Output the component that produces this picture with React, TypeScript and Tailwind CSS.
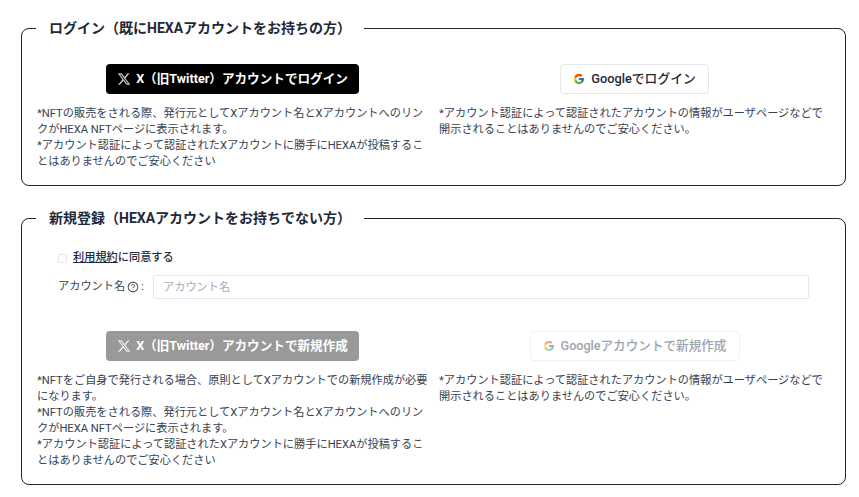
import { AiOutlineQuestionCircle } from 'react-icons/ai';
import { FcGoogle } from 'react-icons/fc';
import type { ReactNode } from 'react';

function XLogo() {
  return (
    <svg viewBox="0 0 24 24" className="w-[14px] h-[14px] fill-current opacity-80 shrink-0">
      <path d="M18.244 2.25h3.308l-7.227 8.26 8.502 11.24H16.17l-5.214-6.817L4.99 21.75H1.68l7.73-8.835L1.254 2.25H8.08l4.713 6.231zm-1.161 17.52h1.833L7.084 4.126H5.117z" />
    </svg>
  );
}

function GoogleLogo({ dim }: { dim?: boolean }) {
  return <FcGoogle className={`w-3 h-3 shrink-0 ${dim ? 'opacity-50' : ''}`} />;
}

function Box({ title, children }: { title: string; children: ReactNode }) {
  return (
    <fieldset className="border border-[#1f2430] rounded-lg px-0 pb-[15px]">
      <legend className="ml-[14px] px-[13px] text-[14px] leading-5 font-bold text-[#1f2937]">{title}</legend>
      {children}
    </fieldset>
  );
}

export default function App() {
  return (
    <div className="w-[859px] h-[497px] bg-white pl-[21px] pr-[13px] pt-[18px] flex flex-col gap-[22px] font-['Roboto','Noto_Sans_CJK_JP',sans-serif] text-[11.2px] leading-4 text-[#374151] overflow-hidden">
      <Box title="ログイン（既にHEXAアカウントをお持ちの方）">
        <div className="grid grid-cols-2 gap-x-[11px] pt-[26px] px-[15px]">
          <div>
            <div className="flex justify-center">
              <button className="w-[253px] h-[30px] rounded bg-black text-white text-[12.6px] font-bold flex items-center justify-center gap-[5px]">
                <XLogo />
                <span>X（旧Twitter）アカウントでログイン</span>
              </button>
            </div>
            <div className="mt-[12px]">
              <p>*NFTの販売をされる際、発行元としてXアカウント名とXアカウントへのリンクがHEXA NFTページに表示されます。</p>
              <p>*アカウント認証によって認証されたXアカウントに勝手にHEXAが投稿することはありませんのでご安心ください</p>
            </div>
          </div>
          <div>
            <div className="flex justify-center">
              <button className="w-[149px] h-[30px] rounded border border-[#e5e7eb] bg-white text-[#1f2937] text-[12.8px] font-medium flex items-center justify-center gap-[6px]">
                <GoogleLogo />
                <span>Googleでログイン</span>
              </button>
            </div>
            <div className="mt-[12px]">
              <p>*アカウント認証によって認証されたアカウントの情報がユーザページなどで開示されることはありませんのでご安心ください。</p>
            </div>
          </div>
        </div>
      </Box>

      <Box title="新規登録（HEXAアカウントをお持ちでない方）">
        <div className="pt-[22px] pl-[36px] pr-[36px]">
          <label className="flex items-center gap-[6px] h-4 text-[#1f2937] font-medium">
            <span className="w-[9px] h-[9px] border border-[#e5e7eb] rounded-[1px]" />
            <span>
              <span className="underline">利用規約</span>に同意する
            </span>
          </label>
          <div className="flex items-center mt-[9px] h-6">
            <span className="w-[95px] shrink-0 flex items-center gap-[2px]">
              アカウント名
              <AiOutlineQuestionCircle className="w-3 h-3" />
              <span>:</span>
            </span>
            <input
              placeholder="アカウント名"
              className="flex-1 h-6 border border-[#e2e8f0] rounded-[2px] px-[9px] text-[11.2px] placeholder:text-[#a3aab5] outline-none"
            />
          </div>
        </div>
        <div className="grid grid-cols-2 gap-x-[11px] pt-[32px] px-[15px]">
          <div>
            <div className="flex justify-center">
              <button className="w-[253px] h-[30px] rounded bg-[#999999] text-white text-[12.6px] font-bold flex items-center justify-center gap-[5px]">
                <XLogo />
                <span>X（旧Twitter）アカウントで新規作成</span>
              </button>
            </div>
            <div className="mt-[12px]">
              <p>*NFTをご自身で発行される場合、原則としてXアカウントでの新規作成が必要になります。</p>
              <p>*NFTの販売をされる際、発行元としてXアカウント名とXアカウントへのリンクがHEXA NFTページに表示されます。</p>
              <p>*アカウント認証によって認証されたXアカウントに勝手にHEXAが投稿することはありませんのでご安心ください</p>
            </div>
          </div>
          <div>
            <div className="flex justify-center">
              <button className="w-[210px] h-[30px] rounded border border-[#f0f1f3] bg-white text-[#9ca3af] text-[12.6px] font-medium flex items-center justify-center gap-[6px]">
                <GoogleLogo dim />
                <span>Googleアカウントで新規作成</span>
              </button>
            </div>
            <div className="mt-[12px]">
              <p>*アカウント認証によって認証されたアカウントの情報がユーザページなどで開示されることはありませんのでご安心ください。</p>
            </div>
          </div>
        </div>
      </Box>
    </div>
  );
}
